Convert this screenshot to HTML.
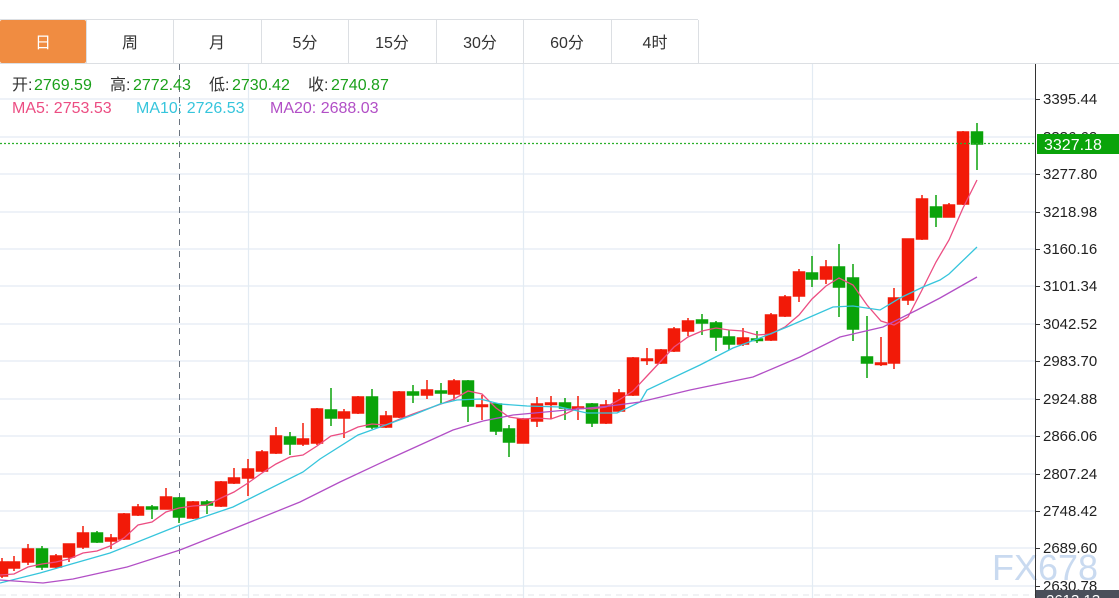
<!DOCTYPE html>
<html><head><meta charset="utf-8"><style>
html,body{margin:0;padding:0;background:#fff;width:1119px;height:598px;overflow:hidden}
svg{display:block}
text{font-family:"Liberation Sans","Noto Sans CJK SC",sans-serif}
</style></head><body>
<svg width="1119" height="598" viewBox="0 0 1119 598" xmlns="http://www.w3.org/2000/svg">
<line x1="0" y1="19.5" x2="698" y2="19.5" stroke="#dcdfe3"/>
<line x1="0" y1="63.5" x2="1119" y2="63.5" stroke="#dcdfe3"/>
<rect x="0" y="20" width="86" height="43" fill="#f08c41" rx="2"/>
<g stroke="#dcdfe3">
<line x1="86.5" y1="20" x2="86.5" y2="63"/><line x1="173.5" y1="20" x2="173.5" y2="63"/>
<line x1="261.5" y1="20" x2="261.5" y2="63"/><line x1="348.5" y1="20" x2="348.5" y2="63"/>
<line x1="436.5" y1="20" x2="436.5" y2="63"/><line x1="523.5" y1="20" x2="523.5" y2="63"/>
<line x1="611.5" y1="20" x2="611.5" y2="63"/><line x1="698.5" y1="20" x2="698.5" y2="63"/>
</g>
<g font-size="16" fill="#333" text-anchor="middle">
<text x="43" y="48" fill="#fff">日</text><text x="130" y="48">周</text><text x="217" y="48">月</text>
<text x="305" y="48">5分</text><text x="392" y="48">15分</text><text x="480" y="48">30分</text>
<text x="567" y="48">60分</text><text x="655" y="48">4时</text>
</g>
<g stroke="#e3ebf3" stroke-width="1.2">
<line x1="0" y1="99" x2="1035" y2="99"/><line x1="0" y1="137" x2="1035" y2="137"/>
<line x1="0" y1="174" x2="1035" y2="174"/><line x1="0" y1="212" x2="1035" y2="212"/>
<line x1="0" y1="249" x2="1035" y2="249"/><line x1="0" y1="286" x2="1035" y2="286"/>
<line x1="0" y1="324" x2="1035" y2="324"/><line x1="0" y1="361" x2="1035" y2="361"/>
<line x1="0" y1="399" x2="1035" y2="399"/><line x1="0" y1="436" x2="1035" y2="436"/>
<line x1="0" y1="474" x2="1035" y2="474"/><line x1="0" y1="511" x2="1035" y2="511"/>
<line x1="0" y1="548" x2="1035" y2="548"/><line x1="0" y1="586" x2="1035" y2="586"/>
<line x1="248.5" y1="64" x2="248.5" y2="598"/><line x1="523.5" y1="64" x2="523.5" y2="598"/>
<line x1="812.5" y1="64" x2="812.5" y2="598"/>
</g>
<line x1="0" y1="595" x2="1035" y2="595" stroke="#e3e6ea" stroke-dasharray="6,5"/>
<line x1="179.5" y1="64" x2="179.5" y2="598" stroke="#6b7480" stroke-dasharray="6,5"/>
<g font-size="16">
<text x="12" y="90" fill="#333">开:</text><text x="34" y="90" fill="#1aa01a">2769.59</text>
<text x="110" y="90" fill="#333">高:</text><text x="133" y="90" fill="#1aa01a">2772.43</text>
<text x="209" y="90" fill="#333">低:</text><text x="232" y="90" fill="#1aa01a">2730.42</text>
<text x="308" y="90" fill="#333">收:</text><text x="331" y="90" fill="#1aa01a">2740.87</text>
<text x="12" y="113" fill="#ec4d82">MA5: 2753.53</text>
<text x="136" y="113" fill="#36c5dc">MA10: 2726.53</text>
<text x="270" y="113" fill="#b24fc6">MA20: 2688.03</text>
</g>
<g stroke="#f21a08" fill="#f21a08" stroke-width="1.5">
<line x1="2" y1="558" x2="2" y2="578"/><rect x="-3.5" y="562" width="11" height="14"/>
<line x1="14" y1="556" x2="14" y2="571"/><rect x="8.5" y="562" width="11" height="6"/>
<line x1="28" y1="544" x2="28" y2="565"/><rect x="22.5" y="549" width="11" height="13"/>
<line x1="56" y1="554" x2="56" y2="569"/><rect x="50.5" y="556" width="11" height="11"/>
<line x1="69" y1="544" x2="69" y2="562"/><rect x="63.5" y="544" width="11" height="13"/>
<line x1="83" y1="526" x2="83" y2="549"/><rect x="77.5" y="533" width="11" height="14"/>
<line x1="111" y1="534" x2="111" y2="549"/><rect x="105.5" y="538" width="11" height="3"/>
<line x1="124" y1="513" x2="124" y2="540"/><rect x="118.5" y="514" width="11" height="25"/>
<line x1="138" y1="504" x2="138" y2="516"/><rect x="132.5" y="507" width="11" height="8"/>
<line x1="166" y1="488" x2="166" y2="509"/><rect x="160.5" y="497" width="11" height="12"/>
<line x1="193" y1="501" x2="193" y2="519"/><rect x="187.5" y="502" width="11" height="16"/>
<line x1="221" y1="481" x2="221" y2="507"/><rect x="215.5" y="482" width="11" height="24"/>
<line x1="234" y1="468" x2="234" y2="484"/><rect x="228.5" y="478" width="11" height="5"/>
<line x1="248" y1="459" x2="248" y2="496"/><rect x="242.5" y="469" width="11" height="9"/>
<line x1="262" y1="450" x2="262" y2="472"/><rect x="256.5" y="452" width="11" height="19"/>
<line x1="276" y1="427" x2="276" y2="454"/><rect x="270.5" y="436" width="11" height="17"/>
<line x1="303" y1="423" x2="303" y2="446"/><rect x="297.5" y="439" width="11" height="5"/>
<line x1="317" y1="408" x2="317" y2="445"/><rect x="311.5" y="409" width="11" height="34"/>
<line x1="344" y1="409" x2="344" y2="438"/><rect x="338.5" y="412" width="11" height="6"/>
<line x1="358" y1="396" x2="358" y2="414"/><rect x="352.5" y="397" width="11" height="16"/>
<line x1="386" y1="411" x2="386" y2="428"/><rect x="380.5" y="416" width="11" height="11"/>
<line x1="399" y1="391" x2="399" y2="418"/><rect x="393.5" y="392" width="11" height="25"/>
<line x1="427" y1="380" x2="427" y2="399"/><rect x="421.5" y="390" width="11" height="5"/>
<line x1="454" y1="379" x2="454" y2="401"/><rect x="448.5" y="381" width="11" height="13"/>
<line x1="482" y1="395" x2="482" y2="420"/><rect x="476.5" y="405" width="11" height="1.5"/>
<line x1="523" y1="418" x2="523" y2="443"/><rect x="517.5" y="419" width="11" height="24"/>
<line x1="537" y1="397" x2="537" y2="427"/><rect x="531.5" y="404" width="11" height="17"/>
<line x1="551" y1="396" x2="551" y2="419"/><rect x="545.5" y="403" width="11" height="1.5"/>
<line x1="578" y1="396" x2="578" y2="420"/><rect x="572.5" y="407" width="11" height="1.5"/>
<line x1="606" y1="400" x2="606" y2="424"/><rect x="600.5" y="405" width="11" height="18"/>
<line x1="619" y1="389" x2="619" y2="412"/><rect x="613.5" y="393" width="11" height="18"/>
<line x1="633" y1="357" x2="633" y2="396"/><rect x="627.5" y="358" width="11" height="37"/>
<line x1="647" y1="348" x2="647" y2="365"/><rect x="641.5" y="359" width="11" height="1.5"/>
<line x1="661" y1="349" x2="661" y2="364"/><rect x="655.5" y="350" width="11" height="13"/>
<line x1="674" y1="327" x2="674" y2="352"/><rect x="668.5" y="329" width="11" height="22"/>
<line x1="688" y1="318" x2="688" y2="336"/><rect x="682.5" y="321" width="11" height="10"/>
<line x1="743" y1="328" x2="743" y2="346"/><rect x="737.5" y="338" width="11" height="6"/>
<line x1="771" y1="313" x2="771" y2="341"/><rect x="765.5" y="315" width="11" height="25"/>
<line x1="785" y1="295" x2="785" y2="317"/><rect x="779.5" y="297" width="11" height="19"/>
<line x1="799" y1="269" x2="799" y2="302"/><rect x="793.5" y="272" width="11" height="24"/>
<line x1="826" y1="260" x2="826" y2="284"/><rect x="820.5" y="267" width="11" height="12"/>
<line x1="881" y1="337" x2="881" y2="366"/><rect x="875.5" y="363" width="11" height="1.5"/>
<line x1="894" y1="288" x2="894" y2="369"/><rect x="888.5" y="298" width="11" height="65"/>
<line x1="908" y1="239" x2="908" y2="305"/><rect x="902.5" y="239" width="11" height="61"/>
<line x1="922" y1="195" x2="922" y2="240"/><rect x="916.5" y="199" width="11" height="40"/>
<line x1="949" y1="203" x2="949" y2="217"/><rect x="943.5" y="205" width="11" height="12"/>
<line x1="963" y1="131" x2="963" y2="205"/><rect x="957.5" y="132" width="11" height="72"/>
</g>
<g stroke="#0aa30a" fill="#0aa30a" stroke-width="1.5">
<line x1="42" y1="546" x2="42" y2="570"/><rect x="36.5" y="549" width="11" height="18"/>
<line x1="97" y1="531" x2="97" y2="543"/><rect x="91.5" y="533" width="11" height="9"/>
<line x1="152" y1="505" x2="152" y2="519"/><rect x="146.5" y="507" width="11" height="2"/>
<line x1="179" y1="497" x2="179" y2="523"/><rect x="173.5" y="498" width="11" height="19"/>
<line x1="207" y1="500" x2="207" y2="514"/><rect x="201.5" y="502" width="11" height="3"/>
<line x1="290" y1="432" x2="290" y2="455"/><rect x="284.5" y="437" width="11" height="7"/>
<line x1="331" y1="388" x2="331" y2="426"/><rect x="325.5" y="410" width="11" height="8"/>
<line x1="372" y1="389" x2="372" y2="429"/><rect x="366.5" y="397" width="11" height="30"/>
<line x1="413" y1="385" x2="413" y2="403"/><rect x="407.5" y="392" width="11" height="3"/>
<line x1="441" y1="383" x2="441" y2="404"/><rect x="435.5" y="391" width="11" height="2"/>
<line x1="468" y1="380" x2="468" y2="422"/><rect x="462.5" y="381" width="11" height="25"/>
<line x1="496" y1="403" x2="496" y2="435"/><rect x="490.5" y="404" width="11" height="27"/>
<line x1="509" y1="425" x2="509" y2="457"/><rect x="503.5" y="429" width="11" height="13"/>
<line x1="565" y1="398" x2="565" y2="420"/><rect x="559.5" y="403" width="11" height="5"/>
<line x1="592" y1="403" x2="592" y2="427"/><rect x="586.5" y="404" width="11" height="19"/>
<line x1="702" y1="314" x2="702" y2="335"/><rect x="696.5" y="320" width="11" height="3"/>
<line x1="716" y1="321" x2="716" y2="351"/><rect x="710.5" y="323" width="11" height="14"/>
<line x1="729" y1="330" x2="729" y2="350"/><rect x="723.5" y="337" width="11" height="7"/>
<line x1="757" y1="331" x2="757" y2="343"/><rect x="751.5" y="339" width="11" height="1.5"/>
<line x1="812" y1="256" x2="812" y2="287"/><rect x="806.5" y="273" width="11" height="6"/>
<line x1="839" y1="244" x2="839" y2="317"/><rect x="833.5" y="267" width="11" height="20"/>
<line x1="853" y1="264" x2="853" y2="341"/><rect x="847.5" y="278" width="11" height="51"/>
<line x1="867" y1="316" x2="867" y2="378"/><rect x="861.5" y="357" width="11" height="6"/>
<line x1="936" y1="195" x2="936" y2="227"/><rect x="930.5" y="207" width="11" height="10"/>
<line x1="977" y1="123" x2="977" y2="170"/><rect x="971.5" y="132" width="11" height="12"/>
</g>
<polyline fill="none" stroke="#ec4d82" stroke-width="1.3" points="0,575 14,574 28,567 42,564 56,562 69,559 83,553 97,551 110,546 124,538 138,525 152,522 166,512 179,508 193,506 207,505 221,498 234,492 248,483 262,473 276,464 290,457 303,455 317,446 331,436 345,433 358,427 372,424 386,425 400,419 413,414 427,409 441,404 454,399 468,391 482,394 496,408 509,417 523,419 537,418 551,419 565,414 578,408 592,409 606,407 619,400 633,391 647,376 661,361 674,347 688,337 702,331 716,328 729,330 743,331 757,335 771,334 785,327 799,315 812,299 826,286 839,278 853,285 867,305 881,321 894,325 908,317 922,290 936,262 949,240 963,208 977,180"/>
<polyline fill="none" stroke="#36c5dc" stroke-width="1.3" points="0,583 40,573 110,553 180,525 233,507 303,472 320,459 358,435 413,415 440,404 457,400 480,399 500,404 527,406 560,407 587,413 617,413 640,402 647,390 700,365 733,348 760,338 787,327 833,307 853,306 880,310 900,298 923,287 940,280 949,274 977,247"/>
<polyline fill="none" stroke="#b24fc6" stroke-width="1.3" points="0,580 43,583 73,579 127,567 180,550 233,529 300,502 340,482 387,460 453,430 483,421 513,415 567,410 610,406 640,402 690,390 753,377 800,357 840,337 883,327 917,310 940,298 977,277"/>
<line x1="0" y1="143.5" x2="1035" y2="143.5" stroke="#2bb02b" stroke-width="1.3" stroke-dasharray="2,2"/>
<text x="992" y="580" font-size="36" fill="#c9daf0">FX678</text>
<line x1="1035.5" y1="64" x2="1035.5" y2="598" stroke="#333"/>
<g stroke="#333">
<line x1="1035" y1="99.5" x2="1040" y2="99.5"/><line x1="1035" y1="174.5" x2="1040" y2="174.5"/>
<line x1="1035" y1="212.5" x2="1040" y2="212.5"/><line x1="1035" y1="249.5" x2="1040" y2="249.5"/>
<line x1="1035" y1="286.5" x2="1040" y2="286.5"/><line x1="1035" y1="324.5" x2="1040" y2="324.5"/>
<line x1="1035" y1="361.5" x2="1040" y2="361.5"/><line x1="1035" y1="399.5" x2="1040" y2="399.5"/>
<line x1="1035" y1="436.5" x2="1040" y2="436.5"/><line x1="1035" y1="474.5" x2="1040" y2="474.5"/>
<line x1="1035" y1="511.5" x2="1040" y2="511.5"/><line x1="1035" y1="548.5" x2="1040" y2="548.5"/>
<line x1="1035" y1="586.5" x2="1040" y2="586.5"/>
</g>
<g font-size="15" fill="#222">
<text x="1043" y="104">3395.44</text><text x="1043" y="142">3336.62</text>
<text x="1043" y="179">3277.80</text><text x="1043" y="217">3218.98</text>
<text x="1043" y="254">3160.16</text><text x="1043" y="291">3101.34</text>
<text x="1043" y="329">3042.52</text><text x="1043" y="366">2983.70</text>
<text x="1043" y="404">2924.88</text><text x="1043" y="441">2866.06</text>
<text x="1043" y="479">2807.24</text><text x="1043" y="516">2748.42</text>
<text x="1043" y="553">2689.60</text><text x="1043" y="591">2630.78</text>
</g>
<rect x="1037" y="134" width="82" height="20" fill="#0aa30a"/>
<text x="1044" y="150" font-size="16" fill="#fff">3327.18</text>
<rect x="1036" y="590" width="83" height="8" fill="#4a4f5a"/>
<text x="1046" y="605" font-size="15" fill="#fff">2613.13</text>
</svg>
</body></html>
